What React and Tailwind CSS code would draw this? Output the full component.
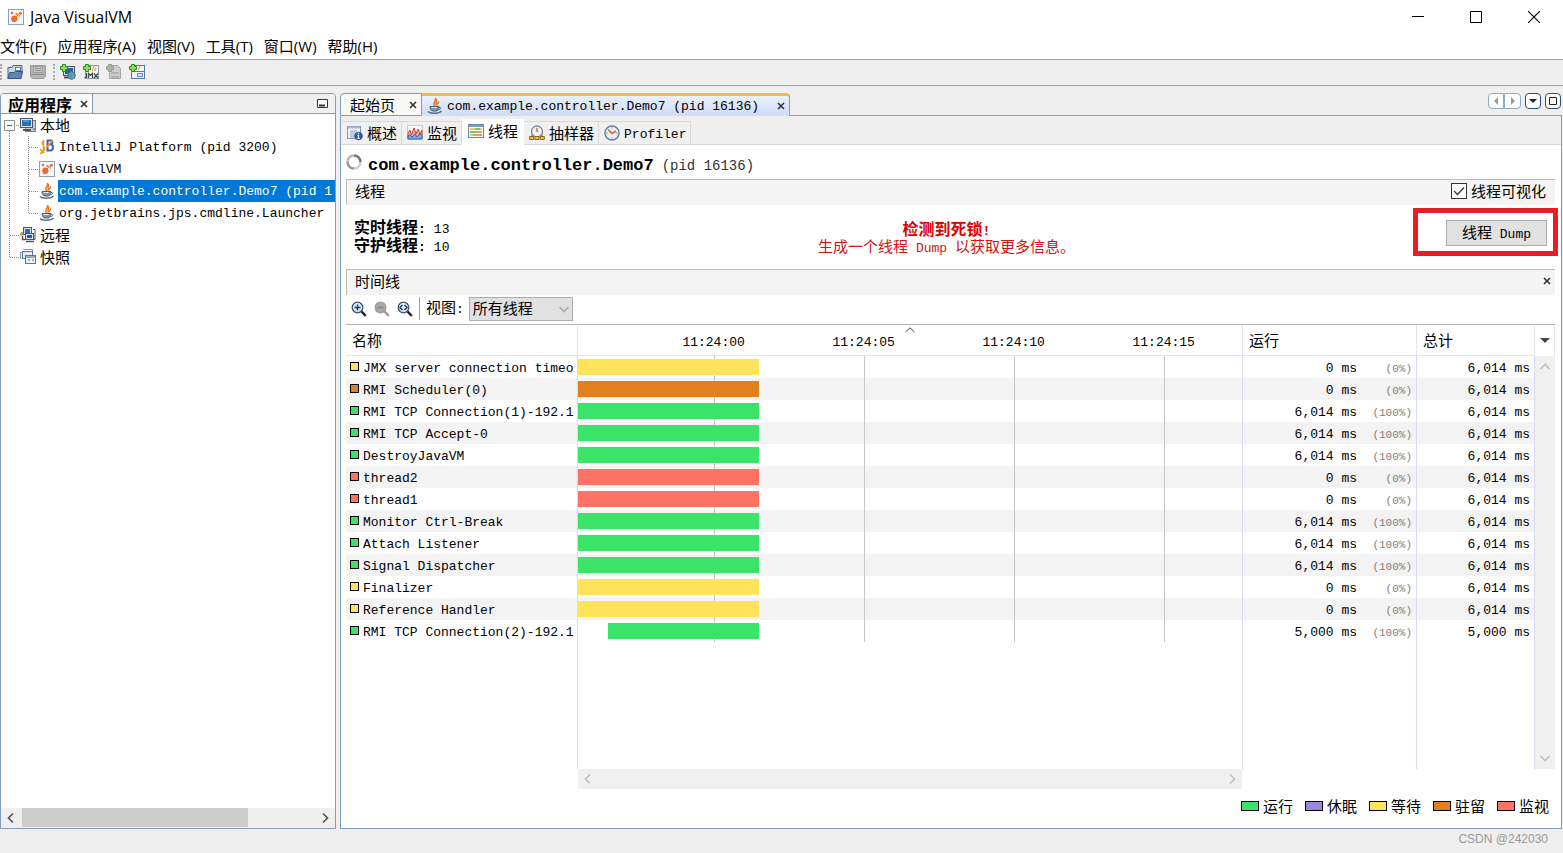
import React, { useState } from 'react';

const STATE_COLORS = {
  running: 'bg-[#3be468]',
  sleeping: 'bg-[#9b87e0]',
  waiting: 'bg-[#ffe35b]',
  parked: 'bg-[#e27f1f]',
  monitor: 'bg-[#ff7366]',
};

const LEGEND = [
  { state: 'running', label: '运行' },
  { state: 'sleeping', label: '休眠' },
  { state: 'waiting', label: '等待' },
  { state: 'parked', label: '驻留' },
  { state: 'monitor', label: '监视' },
];

// seconds shown by the timeline column, and where the ticks stand in it
const SPAN = 22.13;
const TICKS = [
  { at: 4.52, label: '11:24:00' },
  { at: 9.52, label: '11:24:05' },
  { at: 14.52, label: '11:24:10' },
  { at: 19.52, label: '11:24:15' },
];

const THREADS = [
  { name: 'JMX server connection timeo', state: 'waiting', run: '0 ms', pct: '(0%)', total: '6,014 ms' },
  { name: 'RMI Scheduler(0)', state: 'parked', run: '0 ms', pct: '(0%)', total: '6,014 ms' },
  { name: 'RMI TCP Connection(1)-192.1', state: 'running', run: '6,014 ms', pct: '(100%)', total: '6,014 ms' },
  { name: 'RMI TCP Accept-0', state: 'running', run: '6,014 ms', pct: '(100%)', total: '6,014 ms' },
  { name: 'DestroyJavaVM', state: 'running', run: '6,014 ms', pct: '(100%)', total: '6,014 ms' },
  { name: 'thread2', state: 'monitor', run: '0 ms', pct: '(0%)', total: '6,014 ms' },
  { name: 'thread1', state: 'monitor', run: '0 ms', pct: '(0%)', total: '6,014 ms' },
  { name: 'Monitor Ctrl-Break', state: 'running', run: '6,014 ms', pct: '(100%)', total: '6,014 ms' },
  { name: 'Attach Listener', state: 'running', run: '6,014 ms', pct: '(100%)', total: '6,014 ms' },
  { name: 'Signal Dispatcher', state: 'running', run: '6,014 ms', pct: '(100%)', total: '6,014 ms' },
  { name: 'Finalizer', state: 'waiting', run: '0 ms', pct: '(0%)', total: '6,014 ms' },
  { name: 'Reference Handler', state: 'waiting', run: '0 ms', pct: '(0%)', total: '6,014 ms' },
  { name: 'RMI TCP Connection(2)-192.1', state: 'running', start: 1, run: '5,000 ms', pct: '(100%)', total: '5,000 ms' },
];

const MENUS = ['文件(F)', '应用程序(A)', '视图(V)', '工具(T)', '窗口(W)', '帮助(H)'];

const percent = (seconds) => `${(seconds / SPAN) * 100}%`;

/* ---------- icons ---------- */

function Icon({ children, size = 16, label }) {
  return (
    <svg width={size} height={size} viewBox="0 0 16 16" className="shrink-0" fill="none" aria-label={label} aria-hidden={!label}>
      {children}
    </svg>
  );
}

const VisualVmIcon = () => (
  <Icon>
    <rect x=".5" y=".5" width="15" height="15" fill="#f3f6fb" stroke="#8aa0bd" />
    <path d="M4 7.500c1.500-1.500 4-1.200 5 .5s.5 4-1.500 4.800-3.500.2-4-1.500-.5-2.800.5-3.800z" fill="#ee6a2c" />
    <circle cx="4" cy="4" r="1.300" fill="#ee6a2c" />
    <circle cx="12.300" cy="4.200" r="1.500" fill="#ee6a2c" />
    <circle cx="8.500" cy="5" r="1.100" fill="#ee6a2c" />
    <circle cx="11.500" cy="7" r=".8" fill="#ee6a2c" />
    <path d="M8 8l4-4" stroke="#ee6a2c" />
  </Icon>
);

const JavaIcon = () => (
  <Icon>
    <path d="M8 8C4.500 5.500 9 4 8.500 .5c3 2.500-1 4 1 7M10 7.500c-.5-2 2-2.500 1.500-4" stroke="#e8761e" strokeWidth="1.400" />
    <path d="M3 8.500h9c0 3-1.500 4.500-3 4.500H6c-2 0-3-2-3-4.500z" fill="#7e98ac" stroke="#496277" />
    <path d="M12 9.500c2.500-.5 2 2-.5 2.200" stroke="#496277" />
    <path d="M4.500 9.500h5" stroke="#dce8f0" />
    <path d="M1 13.500c2 2.300 11 2.300 13.500-.5" stroke="#5d7588" strokeWidth="1.500" />
  </Icon>
);

const IntellijIcon = () => (
  <Icon>
    <path d="M8.500 1.500h3c2.500 0 2.500 3.500 0 3.700 3.500.2 3.200 6.300-.2 6.300H8.500v-10zM8.500 5.500h3" stroke="#3f66b8" strokeWidth="2" />
    <path d="M4.500 1v9.500c0 3-1.500 4-3.500 3.500M3 2.500l3 9M1 10l4 4M14 1L7 9" stroke="#f2961c" strokeWidth="1.600" />
  </Icon>
);

const HostIcon = () => (
  <Icon>
    <rect x="5.500" y="3.500" width="10" height="11" fill="#c8ccd2" stroke="#777f8a" />
    <rect x=".5" y="1.500" width="12" height="9" fill="#dfe3e8" stroke="#4c5663" />
    <rect x="2" y="3" width="9" height="6" fill="#2d6db5" />
    <path d="M3 4h6" stroke="#7fb0e2" />
    <path d="M3 13h8" stroke="#4c5663" strokeWidth="2" />
    <path d="M13 12h2" stroke="#555" />
  </Icon>
);

const RemoteIcon = () => (
  <Icon>
    <rect x="3.500" y=".5" width="8" height="7" fill="#dfe3e8" stroke="#4c5663" />
    <rect x="5" y="2" width="5" height="4" fill="#2d6db5" />
    <path d="M13 2.500h2v10h-2" stroke="#4c5663" />
    <rect x="5.500" y="6.500" width="8" height="6" fill="#dfe3e8" stroke="#4c5663" />
    <rect x="7" y="8" width="5" height="3" fill="#2457b4" />
    <path d="M6 14.500h8M2.500 9v3.500h3" stroke="#4c5663" strokeWidth="1.500" />
    <circle cx="1.800" cy="7" r="1.500" fill="#e6a23b" stroke="#8a6428" strokeWidth=".5" />
  </Icon>
);

const SnapshotIcon = () => (
  <Icon>
    <path d="M.5 9.500v-6h10M3.500.5h9v7" stroke="#7490b5" />
    <rect x="2.500" y="2.500" width="10" height="7" fill="#e3ebf5" stroke="#5876a3" />
    <rect x="5.500" y="6.500" width="10" height="8" fill="#eef3fa" stroke="#5876a3" />
    <path d="M6 8h9M8 11h2m2 0h2" stroke="#7490b5" strokeWidth="1.500" />
  </Icon>
);

const LoadIcon = () => (
  <Icon>
    <path d="M1 14V3.500h4l1-2h9V9" fill="#c8d7e8" stroke="#46648c" />
    <rect x="8.500" y="3.500" width="5" height="3" fill="#fff" stroke="#5f83b5" />
    <path d="M.8 14.500l2-6h4l1.500-1H15.500l-1.500 7z" fill="#5f85b0" stroke="#34537a" />
  </Icon>
);

const SaveIcon = () => (
  <Icon>
    <path d="M.5 1.500h15v11l-2 2h-11l-2-2z" fill="#b5b5b5" stroke="#9a9a9a" />
    <rect x="3.500" y="2.500" width="9" height="6" fill="#c6c6c6" stroke="#9d9d9d" />
    <path d="M5 4.500h3m1 0h2M5 6.500h6M1 10.500h14" stroke="#8f8f8f" />
  </Icon>
);

const Plus = () => <path d="M2.500.5h3v2h2v3h-2v2h-3v-2h-2v-3h2z" fill="#8be24a" stroke="#2f8a1c" />;

const AddHostIcon = () => (
  <Icon>
    <rect x="3.500" y="2.500" width="11" height="9" fill="#d5dbe2" stroke="#4c5663" />
    <rect x="5" y="4" width="8" height="6" fill="#2f5f97" />
    <path d="M4 13.500h6" stroke="#4c5663" strokeWidth="2" />
    <circle cx="11.500" cy="11.500" r="3.800" fill="#5f9fd6" stroke="#3a6f9f" />
    <path d="M10 9.500l2.500 1-1 3-2-1.500z" fill="#58a843" />
    <Plus />
  </Icon>
);

const AddJmxIcon = () => (
  <Icon>
    <rect x="2.500" y="1.500" width="13" height="13" fill="#eef1f5" stroke="#8a9bb0" />
    <path d="M10 7c-2-2 1-2 1-5M12 7c-1-2 1-1.500 1-3" stroke="#e8761e" />
    <path d="M3.500 9v4.500h-2M5.500 14V9.500l2 2 2-2V14M11 9.500l4 4.500M15 9.500l-4 4.500" stroke="#444" strokeWidth="1.200" />
    <Plus />
  </Icon>
);

const AddCoreIcon = () => (
  <Icon>
    <path d="M3.500 1.500h8l3 3v10h-11z" fill="#cfcfcf" stroke="#a5a5a5" />
    <path d="M6 8v2m2-2v2m2-2v2m2-2v2M6 12v2m2-2v2m2-2v2m2-2v2" stroke="#949494" />
    <path d="M2.500.5h3v2h2v3h-2v2h-3v-2h-2v-3h2z" fill="#a9b8a4" stroke="#92a08e" />
  </Icon>
);

const AddSnapshotIcon = () => (
  <Icon>
    <rect x="2.500" y="1.500" width="13" height="13" fill="#eef3fa" stroke="#5876a3" />
    <path d="M10 6c-2-1 1-2 1-4" stroke="#e8761e" />
    <rect x="8.500" y="9.500" width="5" height="3" fill="#dce8f6" stroke="#5f8cc8" />
    <path d="M3 7.500h12" stroke="#5876a3" />
    <Plus />
  </Icon>
);

const OverviewIcon = () => (
  <Icon>
    <rect x=".5" y="1.500" width="13" height="12" fill="#f0f4fa" stroke="#8496b0" />
    <path d="M1 2.500h12" stroke="#a9bbd4" strokeWidth="2" />
    <path d="M3 6h7M3 8h5M3 10h4M3 12h4" stroke="#8fa0b8" />
    <circle cx="11.500" cy="11" r="4.300" fill="#2b57ad" />
    <path d="M11.500 7.800v1.400M10.500 10.500h1v3m-1.200 0h2.400" stroke="#fff" strokeWidth="1.200" />
  </Icon>
);

const MonitorIcon = () => (
  <Icon>
    <rect x=".5" y=".5" width="15" height="14" fill="#f4f6fa" stroke="#c4ccd8" />
    <path d="M1 13V8l2-3 1.500 5L7 3l2 6 2-5 2 5 2-4v8z" fill="#f0a49c" stroke="#d8453b" />
    <path d="M1 14v-3l2-1 2 2 3-3 2 3 3-3 2 2v3z" fill="#7fa7dc" stroke="#3567b0" />
  </Icon>
);

const ThreadsIcon = () => (
  <Icon>
    <rect x=".5" y="1.500" width="15" height="13" fill="#fbfbf3" stroke="#6f86a8" />
    <path d="M1 3h14" stroke="#7f9cc8" strokeWidth="2" />
    <path d="M2 6h5m5 0h2M2 12h3" stroke="#e4bf3c" strokeWidth="1.600" />
    <path d="M7 6h5M2 9h8" stroke="#58ad55" strokeWidth="1.600" />
    <path d="M10 9h4M5 12h9" stroke="#d97a4a" strokeWidth="1.600" />
  </Icon>
);

const SamplerIcon = () => (
  <Icon>
    <circle cx="8" cy="6.500" r="5.500" fill="#edf1f6" stroke="#7688a0" strokeWidth="1.300" />
    <path d="M8 3v4" stroke="#d66c2f" strokeWidth="1.500" />
    <path d="M.7 11.500h4v3h-4zM6 11.500h4v3H6zM11.300 11.500h4v3h-4zM3 11V9.500M13 11V9.500" fill="#f6c544" stroke="#8d6412" />
  </Icon>
);

const ProfilerIcon = () => (
  <Icon>
    <circle cx="8" cy="8" r="7" fill="#eaf0f6" stroke="#6d8299" strokeWidth="1.500" />
    <path d="M4 4.500L8 8.500l4-2.500" stroke="#e0662b" strokeWidth="1.700" />
    <path d="M8 2.300v1.200m0 9v1.200M2.300 8h1.200m9 0h1.200" stroke="#6d8299" />
  </Icon>
);

function ZoomIcon({ mode, disabled }) {
  const line = disabled ? '#9a9a9a' : '#3b5166';
  return (
    <Icon>
      <path d="M10 10l4.800 4.800" stroke={disabled ? '#9a9a9a' : '#222'} strokeWidth="2.400" />
      <circle cx="6.500" cy="6.500" r="5.300" fill={disabled ? '#a8a8a8' : '#d9e8f4'} stroke={line} strokeWidth="1.300" />
      {mode === 'in' && <path d="M3.500 6.500h6M6.500 3.500v6" stroke="#223f5e" strokeWidth="1.400" />}
      {mode === 'out' && <path d="M3.500 6.500h6" stroke="#858585" strokeWidth="1.400" />}
      {mode === 'fit' && <path d="M5.500 4L3 6.500 5.500 9M7.500 4L10 6.500 7.500 9" stroke="#223f5e" strokeWidth="1.400" />}
    </Icon>
  );
}

function Chevron({ direction, className = 'text-[#bfbfbf]' }) {
  const paths = {
    left: 'M8 1.500L3.500 6 8 10.500',
    right: 'M4 1.500L8.500 6 4 10.500',
    up: 'M1.500 8L6 3.500 10.500 8',
    down: 'M1.500 4L6 8.500 10.500 4',
  };
  return (
    <svg width="12" height="12" viewBox="0 0 12 12" fill="none" className={className} aria-hidden="true">
      <path d={paths[direction]} stroke="currentColor" strokeWidth="1.600" />
    </svg>
  );
}

const CloseGlyph = () => (
  <svg width="8" height="8" viewBox="0 0 8 8" aria-hidden="true">
    <path d="M1 1l6 6M7 1L1 7" stroke="#333" strokeWidth="1.600" />
  </svg>
);

/* ---------- window chrome ---------- */

// Latin text of the Swing UI is fixed width and a bit smaller than the Chinese
const Mono = ({ children }) => (
  <span className="font-['Liberation_Mono',monospace] text-[13px]">{children}</span>
);

function TitleBar() {
  return (
    <header className="flex h-[33px] items-center bg-white pl-2">
      <VisualVmIcon />
      <h1 className="ml-[6px] flex-1 font-['Open_Sans',sans-serif] text-[16px] leading-5">Java VisualVM</h1>
      <button aria-label="最小化" className="flex h-full w-[58px] items-center justify-center">
        <svg width="12" height="12"><path d="M0 5.500h12" stroke="#000" /></svg>
      </button>
      <button aria-label="最大化" className="flex h-full w-[58px] items-center justify-center">
        <svg width="12" height="12"><path d="M.5.5h11v11H.5z" fill="none" stroke="#000" /></svg>
      </button>
      <button aria-label="关闭" className="flex h-full w-[58px] items-center justify-center">
        <svg width="12" height="12"><path d="M0 0l12 12M12 0L0 12" stroke="#000" strokeWidth="1.200" /></svg>
      </button>
    </header>
  );
}

function MenuBar() {
  return (
    <nav className="flex h-[26px] items-center gap-[11px] bg-white font-['Open_Sans','Noto_Sans_CJK_SC',sans-serif]">
      {MENUS.map((m) => (
        <button key={m} className="whitespace-nowrap">{m}</button>
      ))}
    </nav>
  );
}

const Grip = () => <span className="h-4 w-[2px] border-l-2 border-dotted border-[#a8a8a8]" />;

function ToolBar() {
  return (
    <div className="flex h-[27px] items-center border-y border-[#a0a0a0] bg-[#efefef] pb-px">
      <Grip />
      <div className="ml-[5px] flex gap-[7px]">
        <button aria-label="装入"><LoadIcon /></button>
        <button aria-label="另存为" disabled><SaveIcon /></button>
      </div>
      <div className="ml-[7px] flex items-center gap-[5px]">
        <Grip />
        <div className="flex gap-[7px]">
          <button aria-label="添加远程主机"><AddHostIcon /></button>
          <button aria-label="添加 JMX 连接"><AddJmxIcon /></button>
          <button aria-label="添加核心 Dump" disabled><AddCoreIcon /></button>
          <button aria-label="添加快照"><AddSnapshotIcon /></button>
        </div>
      </div>
    </div>
  );
}

/* ---------- applications tree ---------- */

function Branch({ last, outer, indent }) {
  return (
    <svg width={indent ? 38 : 19} height="22" className="shrink-0" aria-hidden="true">
      <g stroke="#8c8c8c" strokeDasharray="1 1">
        {(outer || !indent) && <path d={`M8.500 0v${!indent && last ? 11 : 22}`} />}
        {indent && <path d={`M27.500 0v${last ? 11 : 22}`} />}
        <path d={indent ? 'M28 11.500h10' : 'M9 11.500h10'} />
      </g>
    </svg>
  );
}

function AppItem({ icon, label, selected, last }) {
  return (
    <li className="flex h-[22px] items-center">
      <Branch indent outer last={last} />
      {icon}
      <a
        href="#app"
        className={`ml-[3px] h-[22px] min-w-0 flex-1 overflow-hidden pl-px leading-[18px] whitespace-nowrap ${selected ? 'bg-[#0078d7] text-white' : ''}`}
      >
        <Mono>{label}</Mono>
      </a>
    </li>
  );
}

function Applications() {
  const [open, setOpen] = useState(true);
  return (
    <aside className="flex w-[336px] shrink-0 flex-col overflow-hidden rounded-t border border-[#7f9db9] bg-white">
      <div className="flex h-5 items-center border-b border-[#7f9db9] bg-[#efefef]">
        <div className="flex h-full items-center gap-2 border-r border-[#7f9db9] bg-[#f8f8f4] pr-1 pl-[7px]">
          <h2 className="text-[16px] leading-5 font-bold">应用程序</h2>
          <button aria-label="关闭应用程序"><CloseGlyph /></button>
        </div>
        <button aria-label="最小化窗口组" className="mr-[7px] ml-auto">
          <svg width="11" height="9"><path d="M.5.5h10v8H.5z" fill="#fff" stroke="#333" /><path d="M2 6.500h6" stroke="#333" strokeWidth="2" /></svg>
        </button>
      </div>

      <ul className="flex-1">
        <li>
          <div className="flex h-[22px] items-center">
            <button aria-label="展开或折叠" onClick={() => setOpen(!open)} className="w-[19px] shrink-0">
              <svg width="19" height="22">
                <path d="M8.500 17v5M15 11.500h4" stroke="#8c8c8c" strokeDasharray="1 1" />
                <path d="M3.500 6.500h10v10h-10z" fill="#fff" stroke="#919191" />
                <path d={open ? 'M6 11.500h5' : 'M6 11.500h5M8.500 9v5'} stroke="#3c5a99" />
              </svg>
            </button>
            <HostIcon />
            <span className="ml-1">本地</span>
          </div>
          {open && (
            <ul>
              <AppItem icon={<IntellijIcon />} label="IntelliJ Platform (pid 3200)" />
              <AppItem icon={<VisualVmIcon />} label="VisualVM" />
              <AppItem icon={<JavaIcon />} label="com.example.controller.Demo7 (pid 1" selected />
              <AppItem icon={<JavaIcon />} label="org.jetbrains.jps.cmdline.Launcher" last />
            </ul>
          )}
        </li>
        <li className="flex h-[22px] items-center">
          <Branch />
          <RemoteIcon />
          <span className="ml-1">远程</span>
        </li>
        <li className="flex h-[22px] items-center">
          <Branch last />
          <SnapshotIcon />
          <span className="ml-1">快照</span>
        </li>
      </ul>

      <div className="flex h-5 items-center bg-[#efefef] px-1">
        <Chevron direction="left" className="text-[#505050]" />
        <div className="ml-[5px] h-full flex-1">
          <div className="h-[19px] w-[76%] bg-[#cdcdcd]" />
        </div>
        <Chevron direction="right" className="text-[#505050]" />
      </div>
    </aside>
  );
}

/* ---------- main area ---------- */

function DocumentTabs() {
  return (
    <div className="flex h-[23px] items-stretch">
      <div className="flex w-[82px] items-center justify-between rounded-tl border border-[#7f9db9] bg-[#f8f8f4] pr-1 pl-[9px]">
        <button className="leading-5">起始页</button>
        <button aria-label="关闭起始页"><CloseGlyph /></button>
      </div>
      <div className="flex w-[368px] items-center rounded-tr border-t-[3px] border-r border-b border-t-[#fdb73e] border-r-[#7f9db9] border-b-[#d3dff6] bg-linear-to-b from-[#eaf0fc] to-[#d0ddf6] pr-1 pl-[5px]">
        <JavaIcon />
        <button className="ml-1 flex-1 text-left whitespace-nowrap"><Mono>com.example.controller.Demo7 (pid 16136)</Mono></button>
        <button aria-label="关闭 Demo7"><CloseGlyph /></button>
      </div>
      <div className="flex flex-1 items-start justify-end gap-1 border-b border-[#7f9db9] pr-px">
        <div className="flex">
          <button aria-label="上一个" className="flex h-4 w-4 items-center justify-center rounded-l border border-[#8fa9c2] bg-white">
            <svg width="6" height="8"><path d="M5 0v8L1 4z" fill="#999" /></svg>
          </button>
          <button aria-label="下一个" className="flex h-4 w-[17px] items-center justify-center rounded-r border border-[#8fa9c2] bg-white">
            <svg width="6" height="8"><path d="M1 0v8l4-4z" fill="#999" /></svg>
          </button>
        </div>
        <button aria-label="文档列表" className="flex h-4 w-4 items-center justify-center rounded border border-[#2a4f74] bg-white">
          <svg width="8" height="4"><path d="M0 0h8L4 4z" fill="#222" /></svg>
        </button>
        <button aria-label="最大化文档" className="flex h-4 w-4 items-center justify-center rounded border border-[#2a4f74] bg-white">
          <svg width="8" height="8"><path d="M.5.5h7v7h-7z" fill="none" stroke="#222" /></svg>
        </button>
      </div>
    </div>
  );
}

function ViewTabs() {
  const tab = 'flex h-[23px] items-center gap-1 border-t border-r border-[#d9d9d9] bg-[#f0f0f0] pr-1 pl-[5px]';
  return (
    <div className="flex h-[29px] items-end border-b border-[#d9d9d9] bg-[#efefef] pl-px">
      <button className={tab}><OverviewIcon />概述</button>
      <button className={tab}><MonitorIcon />监视</button>
      <button className="-mb-px flex h-[26px] items-center gap-1 bg-white px-[6px] pb-[2px]"><ThreadsIcon />线程</button>
      <button className={tab}><SamplerIcon />抽样器</button>
      <button className={tab}><ProfilerIcon /><span><Mono>Profiler</Mono></span></button>
    </div>
  );
}

function SectionBar({ title, children }) {
  return (
    <div className="flex h-[26px] items-center justify-between border-t border-l border-[#bdbdbd] bg-[#f4f4f4] pr-[9px] pb-1 pl-2">
      <h3>{title}</h3>
      {children}
    </div>
  );
}

function Summary() {
  return (
    <div className="grid h-16 grid-cols-[1fr_auto_1fr] items-center pr-2">
      <dl className="pl-2 leading-[18px]">
        <div className="flex h-[18px] items-center gap-2">
          <dt className="text-[16px] font-bold">实时线程<Mono>:</Mono></dt>
          <dd><Mono>13</Mono></dd>
        </div>
        <div className="flex h-[18px] items-center gap-2">
          <dt className="text-[16px] font-bold">守护线程<Mono>:</Mono></dt>
          <dd><Mono>10</Mono></dd>
        </div>
      </dl>
      <div className="text-center leading-[18px] text-[#d01414]">
        <p className="h-[18px] text-[16px] font-bold text-[#e00000]">检测到死锁<Mono>!</Mono></p>
        <p className="h-[18px]">生成一个线程<Mono> Dump </Mono>以获取更多信息。</p>
      </div>
      <div className="relative mb-2 justify-self-end">
        <button className="block h-[26px] border border-[#adadad] bg-[#e1e1e1] px-[15px] leading-[22px]">
          线程<Mono> Dump</Mono>
        </button>
        <span className="pointer-events-none absolute -top-3 -right-[11px] -bottom-[10px] -left-[33px] border-[5px] border-[#ed1c24]" />
      </div>
    </div>
  );
}

function TimelineToolbar() {
  return (
    <div className="flex h-[29px] items-center pb-[2px] pl-[5px]">
      <div className="flex gap-[7px]">
        <button aria-label="放大"><ZoomIcon mode="in" /></button>
        <button aria-label="缩小" disabled><ZoomIcon mode="out" disabled /></button>
        <button aria-label="适合窗口"><ZoomIcon mode="fit" /></button>
      </div>
      <label htmlFor="view" className="ml-[6px] border-l border-[#a0a0a0] pl-[6px] leading-5">视图<Mono>:</Mono></label>
      <div className="relative ml-[5px]">
        <select id="view" className="block h-6 w-[104px] appearance-none border border-[#adadad] bg-[#e1e1e1] pb-px pl-[3px] leading-5">
          <option>所有线程</option>
        </select>
        <span className="pointer-events-none absolute top-[6px] right-[3px]"><Chevron direction="down" className="text-[#a8a8a8]" /></span>
      </div>
    </div>
  );
}

function ThreadRow({ thread, striped }) {
  const start = thread.start || 0;
  const line = 'border-[#d9dcf0]';
  return (
    <tr className={`h-[22px] ${striped ? 'bg-[#f3f3f3]' : ''}`}>
      <td className={`border-r ${line} p-0`}>
        <div className="flex h-[22px] items-center overflow-hidden pl-1 whitespace-nowrap">
          <span className={`mb-[2px] h-[9px] w-[9px] shrink-0 border border-black ${STATE_COLORS[thread.state]}`} />
          <span className="ml-1 min-w-0 overflow-hidden pt-[3px] leading-[18px]">{thread.name}</span>
        </div>
      </td>
      <td className="p-0">
        <div className="relative h-[22px]">
          {TICKS.map((t) => (
            <span key={t.label} className="absolute top-0 h-full w-px bg-[#c6c6c6]" style={{ left: percent(t.at) }} />
          ))}
          <span
            className={`absolute top-[3px] h-4 ${STATE_COLORS[thread.state]}`}
            style={{ left: percent(start), width: percent(6.03 - start) }}
          />
        </div>
      </td>
      <td className={`border-l ${line} p-0 pr-1`}>
        <div className="flex items-center justify-end pt-[3px] leading-[18px]">
          <span>{thread.run}</span>
          <span className="w-[55px] text-right text-[11px] text-[#808080]">{thread.pct}</span>
        </div>
      </td>
      <td className={`border-x ${line} p-0 pt-[3px] pr-1 text-right leading-[18px]`}>{thread.total}</td>
    </tr>
  );
}

function Timeline() {
  return (
    <div className="flex flex-1 flex-col">
      <div className="flex flex-1 items-stretch border-t border-[#b5b5b5]">
        <table className="w-full min-w-0 table-fixed border-separate border-spacing-0">
          <colgroup>
            <col className="w-[232px]" />
            <col />
            <col className="w-[174px]" />
            <col className="w-[119px]" />
          </colgroup>
          <thead>
            <tr className="h-[31px] text-left [&>th]:border-b [&>th]:border-[#e5e5e5] [&>th]:font-normal">
              <th className="border-r p-0 pl-[6px]">名称</th>
              <th className="p-0">
                <div className="relative h-[30px] font-['Liberation_Mono',monospace] text-[13px]">
                  <svg width="10" height="6" className="absolute top-[2px] left-1/2 -translate-x-1/2" aria-hidden="true">
                    <path d="M.5 5L5 .8 9.500 5" fill="none" stroke="#444" />
                  </svg>
                  {TICKS.map((t) => (
                    <span key={t.label} className="absolute top-2 -translate-x-1/2 leading-5" style={{ left: percent(t.at) }}>{t.label}</span>
                  ))}
                </div>
              </th>
              <th className="border-l p-0 pl-[6px]">运行</th>
              <th className="border-x p-0 pl-[6px]">总计</th>
            </tr>
          </thead>
          <tbody className="font-['Liberation_Mono',monospace] text-[13px]">
            {THREADS.map((t, i) => (
              <ThreadRow key={t.name} thread={t} striped={i % 2 === 1} />
            ))}
            <tr aria-hidden="true">
              <td className="border-r border-[#d9dcf0] p-0" />
              <td className="p-0" />
              <td className="border-l border-[#d9dcf0] p-0" />
              <td className="border-x border-[#d9dcf0] p-0" />
            </tr>
          </tbody>
        </table>
        <div className="flex w-5 shrink-0 flex-col">
          <button aria-label="显示列" className="flex h-[31px] w-5 items-center justify-center border-r border-[#e5e5e5]">
            <svg width="10" height="5"><path d="M0 0h10L5 5z" fill="#444" /></svg>
          </button>
          <div className="flex flex-1 flex-col items-center justify-between bg-[#f0f0f0] py-[5px]">
            <Chevron direction="up" />
            <Chevron direction="down" />
          </div>
        </div>
      </div>
      <div className="mr-[313px] ml-[232px] flex h-5 items-center justify-between bg-[#f0f0f0] px-1">
        <Chevron direction="left" />
        <Chevron direction="right" />
      </div>
    </div>
  );
}

function Legend() {
  return (
    <ul className="flex h-[39px] items-center justify-end gap-3 pr-[6px] pb-[6px]">
      {LEGEND.map(({ state, label }) => (
        <li key={state} className="flex items-center gap-1">
          <span className={`h-[10px] w-[18px] border border-black ${STATE_COLORS[state]}`} />
          {label}
        </li>
      ))}
    </ul>
  );
}

function MainArea() {
  const [showThreads, setShowThreads] = useState(true);
  return (
    <main className="flex min-w-0 flex-1 flex-col">
      <DocumentTabs />
      <div className="flex flex-1 flex-col border-x border-b border-[#7f9db9] bg-white">
        <ViewTabs />
        <div className="flex flex-1 flex-col pr-[6px] pl-[5px]">
          <div className="flex h-[34px] items-center">
            <svg width="16" height="16" viewBox="0 0 16 16" fill="none" aria-hidden="true">
              <path d="M8 1.500a6.500 6.500 0 0 1 6.500 6.500" stroke="#77777c" strokeWidth="2.600" />
              <path d="M14.500 8A6.500 6.500 0 0 1 8 14.500" stroke="#cfcfd2" strokeWidth="2.600" />
              <path d="M8 14.500A6.500 6.500 0 0 1 1.500 8" stroke="#9a9a9e" strokeWidth="2.600" />
              <path d="M1.500 8A6.500 6.500 0 0 1 8 1.500" stroke="#b9b9bd" strokeWidth="2.600" />
            </svg>
            <h2 className="ml-[6px] pt-2 font-['Liberation_Mono',monospace] text-[17px] leading-6 font-bold whitespace-nowrap">
              com.example.controller.Demo7
              <span className="ml-2 text-[14px] font-normal text-[#333333]">(pid 16136)</span>
            </h2>
          </div>
          <SectionBar title="线程">
            <label className="flex items-center gap-1">
              <span className="relative h-4 w-4">
                <input
                  type="checkbox"
                  checked={showThreads}
                  onChange={(e) => setShowThreads(e.target.checked)}
                  className="block h-4 w-4 appearance-none border border-[#333333] bg-white"
                />
                {showThreads && (
                  <svg width="16" height="16" className="pointer-events-none absolute top-0 left-0">
                    <path d="M3 8l3.500 3.500L13 4.500" fill="none" stroke="#333" strokeWidth="1.300" />
                  </svg>
                )}
              </span>
              线程可视化
            </label>
          </SectionBar>
          <Summary />
          <SectionBar title="时间线">
            <button aria-label="关闭时间线" className="-mr-[5px]"><CloseGlyph /></button>
          </SectionBar>
          <TimelineToolbar />
          <Timeline />
          <Legend />
        </div>
      </div>
    </main>
  );
}

export default function App() {
  return (
    <div className="flex min-h-screen flex-col bg-[#efefef] font-['Noto_Sans_CJK_SC',sans-serif] text-[15px] leading-5 text-black">
      <TitleBar />
      <MenuBar />
      <ToolBar />
      <div className="flex flex-1 gap-1 pt-[7px] pr-px">
        <Applications />
        <MainArea />
      </div>
      <footer className="flex h-6 items-start justify-end pr-[15px] font-['Liberation_Sans',sans-serif] text-[12px] leading-5 text-[#999999]">
        CSDN @242030
      </footer>
    </div>
  );
}
